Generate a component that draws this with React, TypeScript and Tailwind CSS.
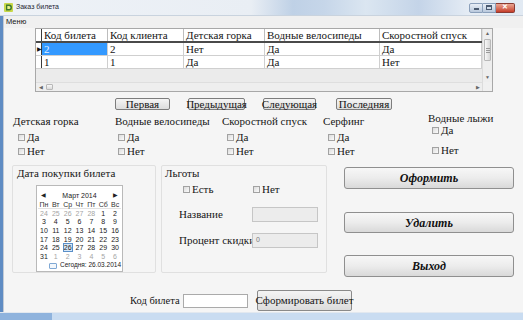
import React from 'react';

const serif = 'font-[family-name:Liberation_Serif,Times_New_Roman,serif]';
const sans = 'font-[family-name:Liberation_Sans,Arial,sans-serif]';

const gridCols = [
  { title: 'Код билета', w: 'w-[66px]' },
  { title: 'Код клиента', w: 'w-[76px]' },
  { title: 'Детская горка', w: 'w-[81px]' },
  { title: 'Водные велосипеды', w: 'w-[115px]' },
  { title: 'Скоростной спуск', w: 'w-[102px]' },
];

const gridRows = [
  ['2', '2', 'Нет', 'Да', 'Да'],
  ['1', '1', 'Да', 'Да', 'Нет'],
];

const options = [
  { title: 'Детская горка', w: 'w-[102px]', ml: 'ml-[9px]', top: 'mt-[3px]', gap: 'mt-[2px]', pad: 'ml-[5px]' },
  { title: 'Водные велосипеды', w: 'w-[107px]', ml: '', top: 'mt-[3px]', gap: 'mt-[2px]', pad: 'ml-[3px]' },
  { title: 'Скоростной спуск', w: 'w-[101px]', ml: '', top: 'mt-[3px]', gap: 'mt-[2px]', pad: 'ml-[5px]' },
  { title: 'Серфинг', w: 'w-[105px]', ml: '', top: 'mt-[3px]', gap: 'mt-[2px]', pad: 'ml-[5px]' },
  { title: 'Водные лыжи', w: 'w-[90px]', ml: '', top: '-mt-[1px]', gap: 'mt-[8px]', pad: 'ml-[4px]' },
];

// Март 2014, неделя с понедельника
const calendar: Array<Array<[string, boolean]>> = [
  [['24', true], ['25', true], ['26', true], ['27', true], ['28', true], ['1', false], ['2', false]],
  [['3', false], ['4', false], ['5', false], ['6', false], ['7', false], ['8', false], ['9', false]],
  [['10', false], ['11', false], ['12', false], ['13', false], ['14', false], ['15', false], ['16', false]],
  [['17', false], ['18', false], ['19', false], ['20', false], ['21', false], ['22', false], ['23', false]],
  [['24', false], ['25', false], ['26', false], ['27', false], ['28', false], ['29', false], ['30', false]],
  [['31', false], ['1', true], ['2', true], ['3', true], ['4', true], ['5', true], ['6', true]],
];

function Check({ label, className = '' }: { label: string; className?: string }) {
  return (
    <div className={`flex h-[12px] items-center ${className}`}>
      <span className="mr-[2px] inline-block h-[7px] w-[7px] border border-[#a2a2a2] bg-gradient-to-br from-[#dcdcdc] to-[#fbfbfb]" />
      <span className="text-[11px] leading-none">{label}</span>
    </div>
  );
}

function TitleBar() {
  return (
    <div className="flex h-[16px] items-center border-b border-[#c9d3de] bg-[linear-gradient(90deg,#eef2f7_0%,#e9eef4_48%,#bfd1e6_56%,#c6d6e9_62%,#dbe6f1_70%,#c4d4e8_80%,#e6edf5_90%,#e2eaf3_100%)]">
      <svg className="ml-[4px] h-[9px] w-[9px]" viewBox="0 0 9 9">
        <rect x="0" y="0" width="9" height="9" rx="1" fill="#c8d84a" />
        <path d="M2 1.5h3.2a2.8 3 0 0 1 0 6H2z" fill="#3f7a2c" />
        <path d="M3.3 3h1.7a1.4 1.5 0 0 1 0 3H3.3z" fill="#e9f08a" />
      </svg>
      <span className={`ml-[3px] text-[7px] text-[#1d2733] ${sans}`}>Заказ билета</span>
      <div className="ml-auto mr-[8px] flex h-[10px] items-stretch">
        <div className="flex w-[14px] items-center justify-center rounded-l-[2px] border border-[#8ba0bb] bg-gradient-to-b from-[#e8eef6] to-[#b9c9dd]">
          <span className="mt-[3px] h-[2px] w-[5px] bg-[#4a5a70]" />
        </div>
        <div className="flex w-[13px] items-center justify-center border-y border-r border-[#8ba0bb] bg-gradient-to-b from-[#e8eef6] to-[#b9c9dd]">
          <span className="h-[5px] w-[6px] border border-t-2 border-[#4a5a70]" />
        </div>
        <div className="flex w-[19px] items-center justify-center rounded-r-[2px] border-y border-r border-[#8a3b32] bg-gradient-to-b from-[#e8a593] to-[#c53b28] text-[7px] font-bold leading-none text-white">
          ✕
        </div>
      </div>
    </div>
  );
}

function DataGrid() {
  return (
    <div className="ml-[31px] flex h-[64px] w-[458px] border border-[#a8a8a8] bg-[#ebebeb]">
      <div className="flex flex-1 flex-col">
        <div className="flex h-[14px] border-b-2 border-[#4a4a4a] bg-white">
          <div className="w-[6px] border-r border-[#3a3a3a]" />
          {gridCols.map((c) => (
            <div
              key={c.title}
              className={`${c.w} overflow-hidden whitespace-nowrap border-r border-[#bdbdbd] pl-[2px] text-[11px] leading-[12px]`}
            >
              {c.title}
            </div>
          ))}
        </div>
        {gridRows.map((row, ri) => (
          <div key={ri} className="flex h-[13px] border-b border-[#cfcfcf] bg-white">
            <div className="flex w-[6px] items-center border-r border-[#3a3a3a] pl-[1px] text-[6px] leading-none">
              {ri === 0 ? '▶' : ''}
            </div>
            {row.map((v, ci) => (
              <div
                key={ci}
                className={`${gridCols[ci].w} border-r border-[#cfcfcf] pl-[2px] text-[11px] leading-[12px] ${
                  ri === 0 && ci === 0 ? 'bg-[#3399ff] text-[#e8f2ff]' : ''
                }`}
              >
                {v}
              </div>
            ))}
          </div>
        ))}
        <div className="flex-1" />
        <div className="flex h-[9px] items-center border-t border-[#dedede] bg-[#eeeeee] text-[5px] text-[#666]">
          <span className="ml-[3px] w-[5px] leading-none">◀</span>
          <span className="ml-[2px] h-[6px] w-[7px] rounded-[1px] border border-[#b8b8b8] bg-gradient-to-b from-[#f8f8f8] to-[#dadada]" />
          <span className="flex-1" />
          <span className="mr-[2px] leading-none">▶</span>
        </div>
      </div>
      <div className="flex w-[10px] flex-col border-l border-[#dcdcdc] bg-[#eeeeee] text-[5px] text-[#666]">
        <div className="flex h-[9px] items-center justify-center leading-none">▲</div>
        <div className="mx-[1px] mt-[1px] flex h-[22px] flex-col items-center justify-center gap-[1px] rounded-[1px] border border-[#b8b8b8] bg-gradient-to-r from-[#f8f8f8] to-[#d8d8d8]">
          <span className="h-px w-[4px] bg-[#9a9a9a]" />
          <span className="h-px w-[4px] bg-[#9a9a9a]" />
          <span className="h-px w-[4px] bg-[#9a9a9a]" />
        </div>
        <div className="flex-1" />
        <div className="flex h-[9px] items-center justify-center leading-none">▼</div>
        <div className="h-[9px] bg-[#f0f0f0]" />
      </div>
    </div>
  );
}

function NavButton({ label, className }: { label: string; className: string }) {
  return (
    <div
      className={`flex h-[12px] items-center justify-center whitespace-nowrap rounded-[2px] border border-[#7d7d7d] bg-gradient-to-b from-[#f5f5f5] to-[#dddddd] text-[11px] leading-none ${className}`}
    >
      {label}
    </div>
  );
}

function BigButton({ label, className }: { label: string; className: string }) {
  return (
    <div
      className={`flex items-center justify-center rounded-[3px] border border-[#8f8f8f] bg-gradient-to-b from-[#f7f7f7] via-[#ececec] to-[#d9d9d9] text-[12px] font-bold italic leading-none text-[#111] ${className}`}
    >
      {label}
    </div>
  );
}

function Calendar() {
  return (
    <div className={`ml-[23px] mt-[5px] flex w-[87px] flex-col border border-[#b9b9b9] bg-white px-[1px] pt-[4px] text-[7px] leading-none text-[#222] ${sans}`}>
      <div className="flex h-[10px] items-center px-[3px]">
        <span className="text-[6px]">◀</span>
        <span className="flex-1 text-center">Март 2014</span>
        <span className="text-[6px]">▶</span>
      </div>
      <div className="grid h-[9px] grid-cols-7 items-center border-b border-[#e2e2e2] text-center text-[#333]">
        {['Пн', 'Вт', 'Ср', 'Чт', 'Пт', 'Сб', 'Вс'].map((d) => (
          <span key={d}>{d}</span>
        ))}
      </div>
      {calendar.map((week, wi) => (
        <div key={wi} className="grid h-[8.6px] grid-cols-7 items-center text-center">
          {week.map(([d, gray], di) => (
            <span
              key={di}
              className={`flex h-full items-center justify-center ${gray ? 'text-[#a5a5a5]' : ''} ${
                wi === 4 && di === 2 ? 'mx-[1px] border border-[#5a8fc8] bg-[#d7e8f8]' : ''
              }`}
            >
              {d}
            </span>
          ))}
        </div>
      ))}
      <div className="flex h-[10px] items-center whitespace-nowrap">
        <span className="ml-[11px] h-[6px] w-[10px] rounded-[1px] border border-[#7fa8d4] bg-[#f2f7fc]" />
        <span className="ml-[3px] text-[6.5px]">Сегодня: 26.03.2014</span>
      </div>
    </div>
  );
}

export default function App() {
  return (
    <div className={`flex h-[320px] w-[523px] flex-col overflow-hidden bg-[#f5f5f5] text-[#151515] ${serif}`}>
      <TitleBar />
      <div className="flex flex-1">
        <div className="w-[4px] border-r border-[#c3cbd5] bg-[#5f8cc3]" />
        <div className="flex flex-1 flex-col">
          {/* menu */}
          <div className={`flex h-[12px] items-center bg-[#f0f0f0] pl-[2px] text-[7.5px] ${sans}`}>Меню</div>

          <DataGrid />

          {/* navigation */}
          <div className="ml-[111px] mt-[6px] flex">
            <NavButton label="Первая" className="w-[55px]" />
            <NavButton label="Предыдущая" className="ml-[18px] w-[57px]" />
            <NavButton label="Следующая" className="ml-[18px] w-[53px]" />
            <NavButton label="Последняя" className="ml-[20px] w-[56px]" />
          </div>

          {/* options */}
          <div className="mt-[4px] flex">
            {options.map((o) => (
              <div key={o.title} className={`flex flex-col ${o.w} ${o.ml}`}>
                <div className={`h-[14px] whitespace-nowrap text-[11px] leading-[14px] ${o.title === 'Водные лыжи' ? '-mt-[3px]' : ''}`}>
                  {o.title}
                </div>
                <Check label="Да" className={`${o.top} ${o.pad}`} />
                <Check label="Нет" className={`${o.gap} ${o.pad}`} />
              </div>
            ))}
          </div>

          {/* bottom area */}
          <div className="mt-[8px] flex h-[112px]">
            <div className="ml-[8px] flex h-[108px] w-[144px] flex-col rounded-[2px] border border-[#e0e0e0]">
              <div className="h-[14px] whitespace-nowrap pl-[4px] text-[11px] leading-[14px]">Дата покупки билета</div>
              <Calendar />
            </div>

            <div className="ml-[5px] flex h-[108px] w-[166px] flex-col rounded-[2px] border border-[#e0e0e0]">
              <div className="h-[14px] pl-[3px] text-[11px] leading-[14px]">Льготы</div>
              <div className="mt-[3px] flex">
                <Check label="Есть" className="ml-[21px] w-[70px]" />
                <Check label="Нет" />
              </div>
              <div className="mt-[12px] flex h-[15px] items-center">
                <span className="ml-[17px] w-[73px] text-[11px]">Название</span>
                <span className="h-[15px] w-[66px] border border-[#c6c6c6] bg-[#ececec]" />
              </div>
              <div className="mt-[11px] flex h-[15px] items-center">
                <span className="ml-[17px] w-[73px] whitespace-nowrap text-[11px]">Процент скидки</span>
                <span className={`flex h-[15px] w-[66px] items-center border border-[#c6c6c6] bg-[#ececec] pl-[3px] text-[7px] text-[#7a7a7a] ${sans}`}>
                  0
                </span>
              </div>
            </div>

            <div className="ml-[17px] flex w-[170px] flex-col">
              <BigButton label="Оформить" className="mt-[2px] h-[22px]" />
              <BigButton label="Удалить" className="mt-[23px] h-[21px]" />
              <BigButton label="Выход" className="mt-[22px] h-[22px]" />
            </div>
          </div>

          {/* ticket row */}
          <div className="mt-[13px] flex h-[21px] items-center">
            <span className="ml-[126px] w-[53px] whitespace-nowrap text-[10.5px]">Код билета</span>
            <span className="h-[14px] w-[65px] border border-[#aaaaaa] bg-white" />
            <div className="ml-[9px] flex h-[21px] w-[95px] items-center justify-center whitespace-nowrap rounded-[2px] border border-[#8a8a8a] bg-gradient-to-b from-[#f4f4f4] to-[#dcdcdc] text-[11px]">
              Сформировать билет
            </div>
          </div>
        </div>
      </div>
      <div className="flex h-[8px] border-t border-[#e2e8ef]">
        <div className="w-[52px] bg-[#8fb3dd]" />
        <div className="flex-1 bg-[#c9dcf1]" />
      </div>
    </div>
  );
}
